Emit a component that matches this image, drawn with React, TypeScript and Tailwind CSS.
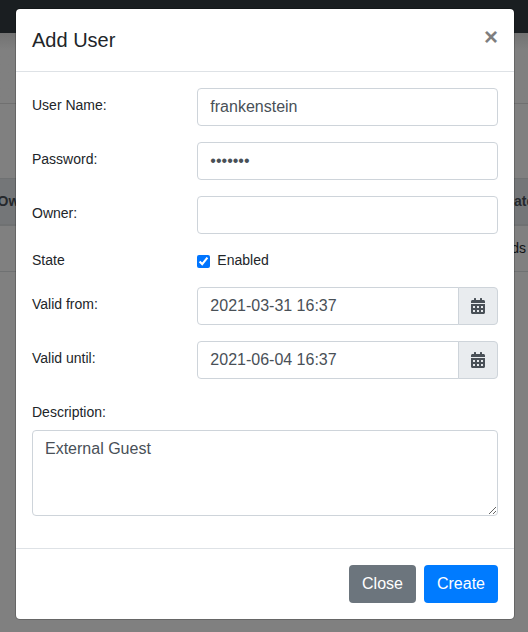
import type { ReactNode } from "react";
import { FaCalendarAlt } from "react-icons/fa";

const control =
  "block h-[38px] w-full rounded border border-[#ced4da] bg-white px-3 py-1.5 text-base leading-6 text-[#495057] outline-none";

function Row({ label, children }: { label: string; children: ReactNode }) {
  return (
    <div className="mb-4 flex">
      <label className="w-[165.33px] shrink-0 pt-[7px] leading-[21px]">{label}</label>
      <div className="flex-1">{children}</div>
    </div>
  );
}

function DateField({ value }: { value: string }) {
  return (
    <div className="flex h-[38px] w-full">
      <input
        type="text"
        defaultValue={value}
        className="min-w-0 flex-1 rounded-l border border-[#ced4da] bg-white px-3 py-1.5 text-base leading-6 text-[#495057] outline-none"
      />
      <button
        type="button"
        className="-ml-px flex w-10 items-center justify-center rounded-r border border-[#ced4da] bg-[#e9ecef] text-[#495057]"
      >
        <FaCalendarAlt className="h-4 w-3.5" />
      </button>
    </div>
  );
}

function PageBehind() {
  return (
    <div className="flex h-full flex-col bg-[#808080] text-sm text-[#111315]">
      <div className="h-[33px] shrink-0 bg-[#1a1e21]" />
      <div className="h-[71px] shrink-0 border-b border-[#707070] bg-linear-to-b from-[#727272] to-[#808080] to-25%" />
      <div className="h-[74px] shrink-0" />
      <div className="flex h-[48px] shrink-0 items-center justify-between border-t border-b-2 border-[#6f7172] bg-[#747678] pb-[2px] font-bold text-[#25282c]">
        <span className="-ml-[2.5px]">Owner</span>
        <span className="-mr-[6px] w-[20px]">ate</span>
      </div>
      <div className="flex h-[46px] shrink-0 items-center justify-end border-b border-[#6f7172] pb-[2px]">
        <span className="mr-[2px]">ds</span>
      </div>
    </div>
  );
}

export default function App() {
  return (
    <div className="relative h-[632px] w-[528px] overflow-hidden font-['Liberation_Sans',Arial,sans-serif] text-sm text-[#212529]">
      <PageBehind />
      <div
        role="dialog"
        className="absolute left-[15px] top-2 flex h-[612px] w-[500px] flex-col rounded-[5px] border border-black/20 bg-white bg-clip-padding"
      >
        <header className="flex h-[63px] shrink-0 items-start justify-between border-b border-[#dee2e6] p-4">
          <h5 className="text-xl leading-[30px] font-normal">Add User</h5>
          <button type="button" className="text-2xl leading-6 font-bold text-black opacity-50">
            ×
          </button>
        </header>
        <div className="flex-1 p-4">
          <Row label="User Name:">
            <input type="text" defaultValue="frankenstein" className={control} />
          </Row>
          <Row label="Password:">
            <input type="password" defaultValue="monster" className={control} />
          </Row>
          <Row label="Owner:">
            <input type="text" className={control} />
          </Row>
          <div className="mb-4 flex h-[21px]">
            <span className="w-[165.33px] leading-[21px]">State</span>
            <label className="flex items-start leading-[21px]">
              <input type="checkbox" defaultChecked className="mt-[5px] mr-[7px] h-[13px] w-[13px]" />
              Enabled
            </label>
          </div>
          <Row label="Valid from:">
            <DateField value="2021-03-31 16:37" />
          </Row>
          <Row label="Valid until:">
            <DateField value="2021-06-04 16:37" />
          </Row>
          <label className="block py-[7px] leading-[21px]">Description:</label>
          <textarea
            defaultValue="External Guest"
            className="block h-[86px] w-full rounded border border-[#ced4da] bg-white px-3 py-1.5 text-base leading-6 text-[#495057] outline-none"
          />
        </div>
        <footer className="flex h-[71px] shrink-0 items-center justify-end gap-2 border-t border-[#dee2e6] px-4 text-base text-white">
          <button type="button" className="h-[38px] rounded bg-[#6c757d] px-[13px]">
            Close
          </button>
          <button type="button" className="h-[38px] rounded bg-[#007bff] px-[13px]">
            Create
          </button>
        </footer>
      </div>
    </div>
  );
}
